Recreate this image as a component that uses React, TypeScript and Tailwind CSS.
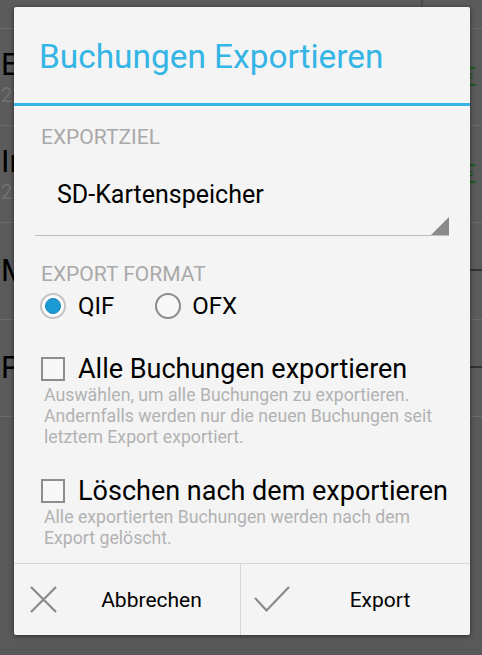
import React from 'react';

const font = { fontFamily: 'Roboto, "Noto Sans", sans-serif' };

function BgRow({ title, sub, right }: { title: string; sub?: string; right?: 'amount' | 'split' }) {
  return (
    <div className="flex h-[97px] border-b border-[#6a6a6a]">
      <div className="flex-1 flex flex-col justify-center pl-px">
        <div className="text-[31px] leading-[36px] text-black">{title}</div>
        {sub && <div className="text-[20px] leading-[24px] text-[#707070]">{sub}</div>}
      </div>
      {right === 'amount' && (
        <div className="w-[20px] flex items-center text-[26px] leading-[30px] text-[#1d5e1d] -ml-[14px]">€</div>
      )}
      {right === 'split' && (
        <div className="w-[12px] flex flex-col">
          <div className="h-[48px] border-b-2 border-[#333]" />
        </div>
      )}
    </div>
  );
}

function Radio({ checked }: { checked?: boolean }) {
  return (
    <div
      className={`w-[26px] h-[26px] rounded-full border-2 flex items-center justify-center ${
        checked ? 'border-[#c4c4c4] bg-[#fbfbfb]' : 'border-[#8c8c8c] bg-[#f7f7f7]'
      }`}
    >
      {checked && <div className="w-[16px] h-[16px] rounded-full bg-[#1a9bd5] border border-[#1580b6]" />}
    </div>
  );
}

function Check() {
  return <div className="w-[24px] h-[24px] border-2 border-[#8d8d8d] bg-[#f7f7f7]" />;
}

export default function App() {
  return (
    <div className="relative w-[482px] h-[655px] overflow-hidden bg-[#595959]" style={font}>
      {/* list behind the dim */}
      <div className="flex flex-col bg-[#5b5b5b]">
        <div className="flex h-[29px] border-b border-[#6a6a6a]">
          <div className="w-[423px] border-r-2 border-[#4a4a4a]" />
        </div>
        <BgRow title="Einkauf" sub="22.11.2013" right="amount" />
        <BgRow title="Internet" sub="22.11.2013" right="amount" />
        <BgRow title="Miete" right="split" />
        <BgRow title="Party" right="split" />
      </div>

      {/* dialog */}
      <div className="absolute left-[14px] top-[7px] w-[456px] h-[628px] flex flex-col bg-[#f4f4f4] rounded-[2px] shadow-[0_1px_5px_rgba(0,0,0,0.55)]">
        <div className="h-[96px] pl-[25px] pt-[30px]">
          <div className="text-[33.4px] leading-[40px] text-[#33b5e5]">Buchungen Exportieren</div>
        </div>
        <div className="h-[3px] bg-[#33b5e5]" />

        <div className="pt-[19px] pl-[27px] text-[21px] leading-[24px] text-[#a9a9a9]">EXPORTZIEL</div>

        <div className="relative mx-[21px] h-[87px] border-b border-[#bdbdbd] pt-[31px] pl-[22px]">
          <div className="text-[25px] leading-[30px] text-black">SD-Kartenspeicher</div>
          <svg className="absolute right-0 bottom-0" width="18" height="18" viewBox="0 0 18 18">
            <polygon points="18,0 18,18 0,18" fill="#8a8a8a" />
          </svg>
        </div>

        <div className="mt-[26px] pl-[27px] text-[21px] leading-[24px] text-[#a9a9a9]">EXPORT FORMAT</div>

        <div className="h-[40px] flex items-center pl-[26px]">
          <Radio checked />
          <div className="ml-[12px] text-[24px] leading-[28px] text-black">QIF</div>
          <div className="ml-[41px]">
            <Radio />
          </div>
          <div className="ml-[11px] text-[24px] leading-[28px] text-black">OFX</div>
        </div>

        <div className="mt-[27px] h-[32px] flex items-center pl-[27px]">
          <Check />
          <div className="ml-[13px] text-[27px] leading-[32px] text-black">Alle Buchungen exportieren</div>
        </div>
        <div className="pl-[30px] pr-[30px] text-[17.7px] leading-[21px] text-[#b2b2b2]">
          Auswählen, um alle Buchungen zu exportieren. Andernfalls werden nur die neuen Buchungen seit letztem Export
          exportiert.
        </div>

        <div className="mt-[27px] h-[32px] flex items-center pl-[27px]">
          <Check />
          <div className="ml-[13px] text-[27px] leading-[32px] text-black">Löschen nach dem exportieren</div>
        </div>
        <div className="pl-[30px] pr-[30px] text-[17.7px] leading-[21px] text-[#b2b2b2]">
          Alle exportierten Buchungen werden nach dem Export gelöscht.
        </div>

        <div className="mt-auto h-[72px] flex border-t border-[#d6d6d6]">
          <div className="w-[227px] flex items-center pl-[16px] border-r border-[#d6d6d6]">
            <svg width="27" height="27" viewBox="0 0 27 27">
              <path d="M1 1 L26 26 M26 1 L1 26" stroke="#8a8a8a" strokeWidth="2.2" fill="none" />
            </svg>
            <div className="flex-1 text-center pl-[6px] text-[21px] leading-[26px] text-black">Abbrechen</div>
          </div>
          <div className="flex-1 flex items-center pl-[13px]">
            <svg width="36" height="27" viewBox="0 0 36 27">
              <path d="M1 12 L12.5 24.5 L35 1" stroke="#8a8a8a" strokeWidth="2.2" fill="none" />
            </svg>
            <div className="flex-1 text-center text-[21px] leading-[26px] text-black">Export</div>
          </div>
        </div>
      </div>
    </div>
  );
}
